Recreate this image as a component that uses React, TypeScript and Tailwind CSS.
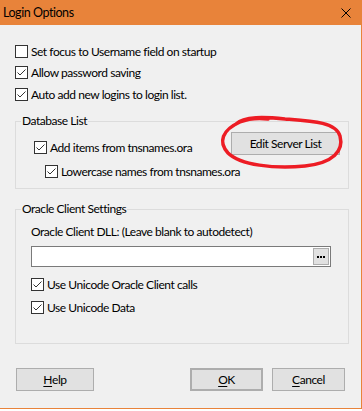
import React from 'react';

const font = { fontFamily: 'Lato, "Noto Sans", sans-serif' };

function Box({ checked }: { checked?: boolean }) {
  return (
    <svg width="13" height="13" viewBox="0 0 13 13" className="shrink-0">
      <rect x="0.5" y="0.5" width="12" height="12" fill="#fff" stroke="#333" />
      {checked ? (
        <polyline points="2.5,6.5 5,9 10.5,3.5" fill="none" stroke="#333" strokeWidth="1" />
      ) : null}
    </svg>
  );
}

function Check({
  label,
  checked,
  className = '',
}: {
  label: string;
  checked?: boolean;
  className?: string;
}) {
  return (
    <div className={`flex h-[13px] items-center ${className}`}>
      <Box checked={checked} />
      <span className="ml-[3px] whitespace-nowrap leading-[13px]">{label}</span>
    </div>
  );
}

function Group({
  title,
  className = '',
  children,
}: {
  title: string;
  className?: string;
  children: React.ReactNode;
}) {
  return (
    <div className={`relative ml-[15px] w-[334px] border border-[#dcdcdc] ${className}`}>
      <span className="absolute left-[5px] top-[-9px] bg-[#f0f0f0] px-[1px] leading-[16px]">
        {title}
      </span>
      {children}
    </div>
  );
}

function Btn({ children, className = '' }: { children: React.ReactNode; className?: string }) {
  return (
    <button
      className={`flex h-[23px] items-center justify-center border border-[#adadad] bg-[#e1e1e1] leading-[16px] ${className}`}
    >
      {children}
    </button>
  );
}

export default function App() {
  return (
    <div
      className="h-[411px] w-[362px] bg-white text-[12px] tracking-[-0.45px] text-black"
      style={font}
    >
      <div className="relative h-[409px] w-[362px] border-b border-r border-[#e8833a] bg-[#f0f0f0]">
        <div className="flex h-[25px] items-center justify-between bg-[#e8833a] pl-[3px] pr-[10px]">
          <span className="text-[12.5px] leading-[16px]">Login Options</span>
          <svg width="10" height="10" viewBox="0 0 10 10">
            <path d="M0.5 0.5 L9.5 9.5 M9.5 0.5 L0.5 9.5" stroke="#000" strokeWidth="1" />
          </svg>
        </div>

        <div className="pt-[20px]">
          <Check className="ml-[15px]" label="Set focus to Username field on startup" />
          <Check className="ml-[15px] mt-[8px]" checked label="Allow password saving" />
          <Check className="ml-[15px] mt-[9px]" checked label="Auto add new logins to login list." />

          <Group title="Database List" className="mt-[20px] pb-[10px] pt-[10px]">
            <div className="flex items-start justify-between pl-[18px] pr-[8px]">
              <Check className="mt-[9px]" checked label="Add items from tnsnames.ora" />
              <Btn className="w-[109px]">Edit Server List</Btn>
            </div>
            <Check className="ml-[29px] mt-[10px]" checked label="Lowercase names from tnsnames.ora" />
          </Group>

          <Group title="Oracle Client Settings" className="mt-[20px] pb-[29px] pt-[14px]">
            <div className="pl-[15px] leading-[16px]">Oracle Client DLL: (Leave blank to autodetect)</div>
            <div className="ml-[15px] mt-[6px] flex h-[21px] w-[300px] items-center justify-end border border-[#7a7a7a] bg-white pr-[1px]">
              <div className="flex h-[17px] w-[16px] items-center justify-center gap-[1px] border border-[#adadad] bg-[#e1e1e1]">
                <span className="h-[2px] w-[2px] bg-black" />
                <span className="h-[2px] w-[2px] bg-black" />
                <span className="h-[2px] w-[2px] bg-black" />
              </div>
            </div>
            <Check className="ml-[15px] mt-[11px]" checked label="Use Unicode Oracle Client calls" />
            <Check className="ml-[15px] mt-[10px]" checked label="Use Unicode Data" />
          </Group>

          <div className="mt-[24px] flex pl-[16px]">
            <Btn className="w-[78px]">
              <span className="underline underline-offset-2">H</span>elp
            </Btn>
            <Btn className="ml-[96px] w-[73px] border-2 border-[#0078d7]">
              <span className="underline underline-offset-2">O</span>K
            </Btn>
            <Btn className="ml-[9px] w-[73px]">
              <span className="underline underline-offset-2">C</span>ancel
            </Btn>
          </div>
        </div>

        <svg
          className="pointer-events-none absolute left-0 top-0"
          width="362"
          height="409"
          viewBox="0 0 362 409"
        >
          <path
            d="M236 124 C 244 116, 265 117, 285 119 C 312 121, 336 122, 340 136 C 344 151, 333 163, 305 166 C 274 169, 240 165, 228 153 C 218 142, 222 130, 240 122 C 250 118, 260 118, 268 119"
            fill="none"
            stroke="#ed1c24"
            strokeWidth="3.5"
            strokeLinecap="round"
          />
        </svg>
      </div>
    </div>
  );
}
